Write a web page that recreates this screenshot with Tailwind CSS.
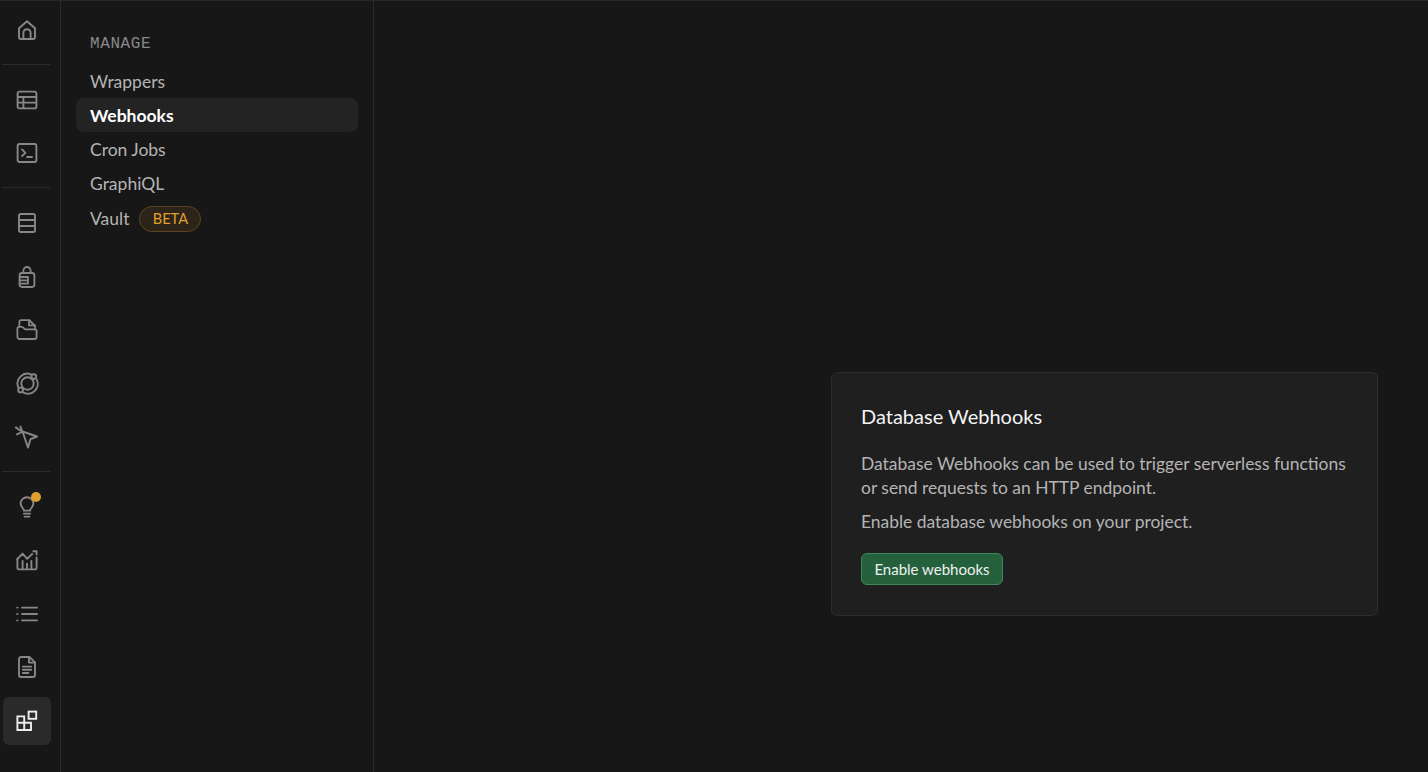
<!DOCTYPE html>
<html lang="en">
<head>
    <meta charset="UTF-8">
    <meta name="viewport" content="width=device-width, initial-scale=1.0">
    <title>Database Webhooks</title>
    <script src="https://cdn.jsdelivr.net/npm/@tailwindcss/browser@4"></script>
</head>
<body class="bg-[#171717] font-['Lato','Liberation_Sans',sans-serif] overflow-hidden">
    <div class="flex h-[772px] w-[1428px] border-t border-[#262626]">

        <!-- Icon rail -->
        <nav class="w-[61px] shrink-0 border-r border-[#2a2a2a] pl-[3px] pr-[9px] pt-[5px] flex flex-col text-[#878787]">
            <div class="flex flex-col gap-[5.4px]">
                <a class="w-[48px] h-[48px] flex items-center justify-center">
                    <svg class="w-[22px] h-[22px]" viewBox="0 0 22 22" fill="none" stroke="currentColor" stroke-width="1.9" stroke-linejoin="round"><path d="M3 9.2 11 2.2l8 7v8.8a2 2 0 0 1-2 2H5a2 2 0 0 1-2-2z"/><path d="M7.4 19.8v-6a3.6 3.6 0 0 1 7.2 0v6"/></svg>
                </a>
            </div>
            <div class="h-px bg-[#2a2a2a] mt-[10px] mb-[11px] -ml-[1px] w-[48px]"></div>
            <div class="flex flex-col gap-[5.4px]">
                <a class="w-[48px] h-[48px] flex items-center justify-center">
                    <svg class="w-[22px] h-[22px]" viewBox="0 0 22 22" fill="none" stroke="currentColor" stroke-width="1.9"><rect x="1.6" y="2.6" width="18.8" height="16.8" rx="2"/><path d="M1.6 8h18.8M1.6 13.6h18.8M7.4 8v11.4"/></svg>
                </a>
                <a class="w-[48px] h-[48px] flex items-center justify-center">
                    <svg class="w-[22px] h-[22px]" viewBox="0 0 22 22" fill="none" stroke="currentColor" stroke-width="1.9" stroke-linecap="round" stroke-linejoin="round"><rect x="1.6" y="2" width="18.8" height="18" rx="2"/><path d="m6 7.4 3.4 3.4L6 14.2M11 15h5"/></svg>
                </a>
            </div>
            <div class="h-px bg-[#2a2a2a] mt-[10px] mb-[11px] -ml-[1px] w-[48px]"></div>
            <div class="flex flex-col gap-[5.4px]">
                <a class="w-[48px] h-[48px] flex items-center justify-center">
                    <svg class="w-[22px] h-[22px]" viewBox="0 0 22 22" fill="none" stroke="currentColor" stroke-width="1.9"><rect x="3" y="2" width="16" height="18" rx="1.8"/><path d="M3 8h16M3 14h16"/></svg>
                </a>
                <a class="w-[48px] h-[48px] flex items-center justify-center">
                    <svg class="w-[22px] h-[22px]" viewBox="0 0 22 22" fill="none" stroke="currentColor" stroke-width="1.8" stroke-linecap="round" stroke-linejoin="round"><rect x="3.6" y="7" width="14.8" height="14" rx="2.4"/><path d="M7.4 7V4.6a3.6 3.6 0 0 1 7.2 0V7"/><path d="M3.6 11h8.4v6.6H3.6M3.6 14.3H12"/></svg>
                </a>
                <a class="w-[48px] h-[48px] flex items-center justify-center">
                    <svg class="w-[22px] h-[22px]" viewBox="0 0 22 22" fill="none" stroke="currentColor" stroke-width="1.8" stroke-linecap="round" stroke-linejoin="round"><path d="M3.4 7V2.8a1.6 1.6 0 0 1 1.6-1.6h8.4L19 7v3"/><path d="M13 1.4v5h6"/><path d="M1.4 18V9.4a1.6 1.6 0 0 1 1.6-1.6h3c1.5 0 1.8 2.6 3.5 2.6H19a1.6 1.6 0 0 1 1.6 1.6V18a2 2 0 0 1-2 2H3.4a2 2 0 0 1-2-2z"/></svg>
                </a>
                <a class="w-[48px] h-[48px] flex items-center justify-center">
                    <svg class="w-[23px] h-[23px]" viewBox="0 0 23 23" fill="none" stroke="currentColor" stroke-width="1.9"><path d="M15.6 2.6A9.8 9.8 0 0 0 2.6 15.8"/><path d="M7 20.4A9.8 9.8 0 0 0 20.4 7"/><circle cx="11.5" cy="11.5" r="6.2"/><circle cx="17.8" cy="4.6" r="2.4"/><circle cx="4.6" cy="18" r="2.4"/></svg>
                </a>
                <a class="w-[48px] h-[48px] flex items-center justify-center">
                    <svg class="w-[24px] h-[24px]" viewBox="0 0 24 24" fill="none" stroke="currentColor" stroke-width="1.9" stroke-linecap="round" stroke-linejoin="round"><path d="M7.5 6.5 22 11.5l-6.5 2.6-2.5 8.4z"/><path d="M.8 2.4 6 6M5.4 1.6 6.8 5M2 9.4l4-1.9"/></svg>
                </a>
            </div>
            <div class="h-px bg-[#2a2a2a] mt-[10px] mb-[11px] -ml-[1px] w-[48px]"></div>
            <div class="flex flex-col gap-[5.4px]">
                <a class="relative w-[48px] h-[48px] flex items-center justify-center">
                    <svg class="w-[22px] h-[22px]" viewBox="0 0 22 22" fill="none" stroke="currentColor" stroke-width="1.9" stroke-linecap="round"><path d="M8 14.6c0-2.2-3.4-3.4-3.4-7a6.4 6.4 0 0 1 12.8 0c0 3.6-3.4 4.8-3.4 7z"/><path d="M7.8 17.6h6.4M8.6 20.6h4.8"/></svg>
                    <span class="absolute top-[9px] left-[28px] w-[10px] h-[10px] rounded-full bg-[#e09f2f]"></span>
                </a>
                <a class="w-[48px] h-[48px] flex items-center justify-center">
                    <svg class="w-[22px] h-[22px]" viewBox="0 0 22 22" fill="none" stroke="currentColor" stroke-width="1.9" stroke-linecap="round" stroke-linejoin="round"><path d="M1.4 10 6.6 4.6l4.6 5.2 5-5"/><path d="M17.4 2.2h3.2v3.2"/><path d="M1.4 10v9a1.4 1.4 0 0 0 1.4 1.4h16.4a1.4 1.4 0 0 0 1.4-1.4V8.4M6.6 20.4V12M15.4 20.4V12M11 20.4V14.6"/></svg>
                </a>
                <a class="w-[48px] h-[48px] flex items-center justify-center">
                    <svg class="w-[22px] h-[22px]" viewBox="0 0 22 22" fill="none" stroke="currentColor" stroke-width="1.9" stroke-linecap="round"><path d="M6 4.6h15M6 11h15M6 17.4h15"/><path d="M1.2 4.6h.3M1.2 11h.3M1.2 17.4h.3"/></svg>
                </a>
                <a class="w-[48px] h-[48px] flex items-center justify-center">
                    <svg class="w-[22px] h-[22px]" viewBox="0 0 22 22" fill="none" stroke="currentColor" stroke-width="1.9" stroke-linecap="round" stroke-linejoin="round"><path d="M3 3a2 2 0 0 1 2-2h8.4L19 6.4V19a2 2 0 0 1-2 2H5a2 2 0 0 1-2-2z"/><path d="M13 1v5.6h6M6.8 10.6h8.4M6.8 13.8h8.4M6.8 17h5.6"/></svg>
                </a>
                <a class="w-[48px] h-[48px] flex items-center justify-center rounded-md bg-[#2a2a2a] text-[#ededed]">
                    <svg class="w-[22px] h-[22px]" viewBox="0 0 22 22" fill="none" stroke="currentColor" stroke-width="1.9"><path d="M1.4 6.4h6.8v6.4h6.8v7.2H1.4z"/><path d="M1.4 12.8h6.8V20M8.2 12.8V20"/><rect x="12.6" y="1.6" width="7.6" height="7.2"/></svg>
                </a>
            </div>
        </nav>

        <!-- Section menu -->
        <aside class="w-[313px] shrink-0 border-r border-[#2a2a2a] pl-[15px] pr-[15px] pt-[32px]">
            <div class="pl-[14px] font-['Liberation_Mono',monospace] text-[16px] tracking-[0.6px] leading-[22px] text-[#8a8a8a] mb-[9px]">MANAGE</div>
            <ul class="flex flex-col text-[17.5px] leading-[36px] text-[#b4b4b4]">
                <li class="h-[34px] pl-[14px]">Wrappers</li>
                <li class="h-[34px] pl-[14px] rounded-lg bg-[#232323] text-white font-bold">Webhooks</li>
                <li class="h-[34px] pl-[14px]">Cron Jobs</li>
                <li class="h-[34px] pl-[14px]">GraphiQL</li>
                <li class="h-[38px] pl-[14px] flex items-center gap-[10px]">
                    Vault
                    <span class="h-[26px] w-[62px] flex items-center justify-center rounded-full border border-[#5c4320] bg-[#2c2419] text-[#e09f2f] text-[14.5px] leading-none">BETA</span>
                </li>
            </ul>
        </aside>

        <!-- Main -->
        <main class="flex-1 flex items-start justify-end pt-[371px] pr-[50px]">
            <section class="w-[547px] h-[244px] rounded-md border border-[#2c2c2c] bg-[#1f1f1f] pl-[29px] pt-[29px]">
                <h2 class="text-[20px] leading-[28px] text-[#f4f4f4]">Database Webhooks</h2>
                <p class="mt-[22px] text-[17.45px] leading-[24px] text-[#b4b4b4]">Database Webhooks can be used to trigger serverless functions<br>or send requests to an HTTP endpoint.</p>
                <p class="mt-[10px] text-[17.45px] leading-[24px] text-[#b4b4b4]">Enable database webhooks on your project.</p>
                <button class="mt-[19px] w-[142px] h-[32px] rounded-md border border-[#3e8a5c] bg-[#24603c] text-[#f0f0f0] text-[15px] leading-none">Enable webhooks</button>
            </section>
        </main>
    </div>
</body>
</html>
